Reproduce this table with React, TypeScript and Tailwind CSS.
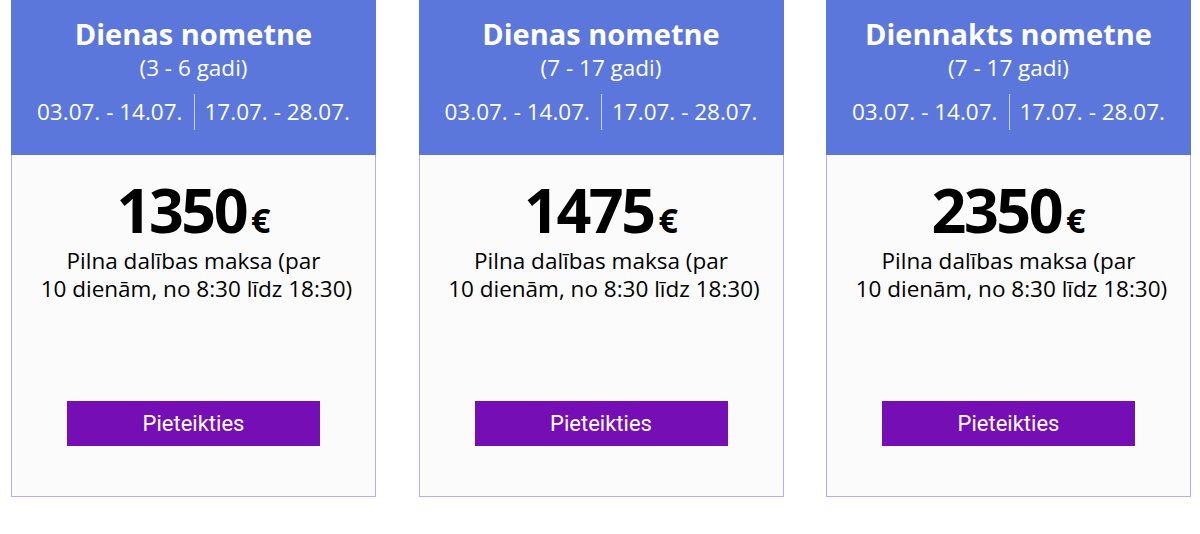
const camps = [
  { title: 'Dienas nometne', ages: '(3 - 6 gadi)', price: '1350' },
  { title: 'Dienas nometne', ages: '(7 - 17 gadi)', price: '1475' },
  { title: 'Diennakts nometne', ages: '(7 - 17 gadi)', price: '2350' },
];

function Card({ title, ages, price }: { title: string; ages: string; price: string }) {
  return (
    <div className="flex w-[365px] flex-col">
      <div className="flex h-[155px] flex-col items-center bg-[#5b77db] pt-[15px] text-white">
        <div className="text-[29px] font-bold leading-[38px]">{title}</div>
        <div className="text-[22.5px] leading-[30px]">{ages}</div>
        <div className="mt-[11px] flex items-center text-[22.5px] leading-[30px]">
          <span className="pr-[11px]">03.07. - 14.07.</span>
          <span className="h-[36px] w-px bg-[#c9d2f3]" />
          <span className="pl-[10px]">17.07. - 28.07.</span>
        </div>
      </div>
      <div className="flex h-[342px] flex-col items-center border-x border-b border-[#b3abff] bg-[#fbfbfb]">
        <div className="mt-[25px] flex h-[60px] items-baseline font-bold text-black">
          <span className="text-[61px] leading-[60px] tracking-[-2.5px]">{price}</span>
          <span className="ml-[5px] text-[34px] leading-none">€</span>
        </div>
        <div className="mt-[7px] text-center text-[22.5px] leading-[28px] text-black">
          Pilna dalības maksa (par
          <br />
          &nbsp;10 dienām, no 8:30 līdz 18:30)
        </div>
        <button className="mt-[98px] h-[45px] w-[253px] bg-[#760eb5] font-['Roboto',sans-serif] text-[22px] text-white">
          Pieteikties
        </button>
      </div>
    </div>
  );
}

export default function App() {
  return (
    <div className="flex h-[534px] w-[1200px] gap-[42.5px] bg-white pl-[11px] font-['Open_Sans',sans-serif]">
      {camps.map((c, i) => (
        <Card key={i} {...c} />
      ))}
    </div>
  );
}
